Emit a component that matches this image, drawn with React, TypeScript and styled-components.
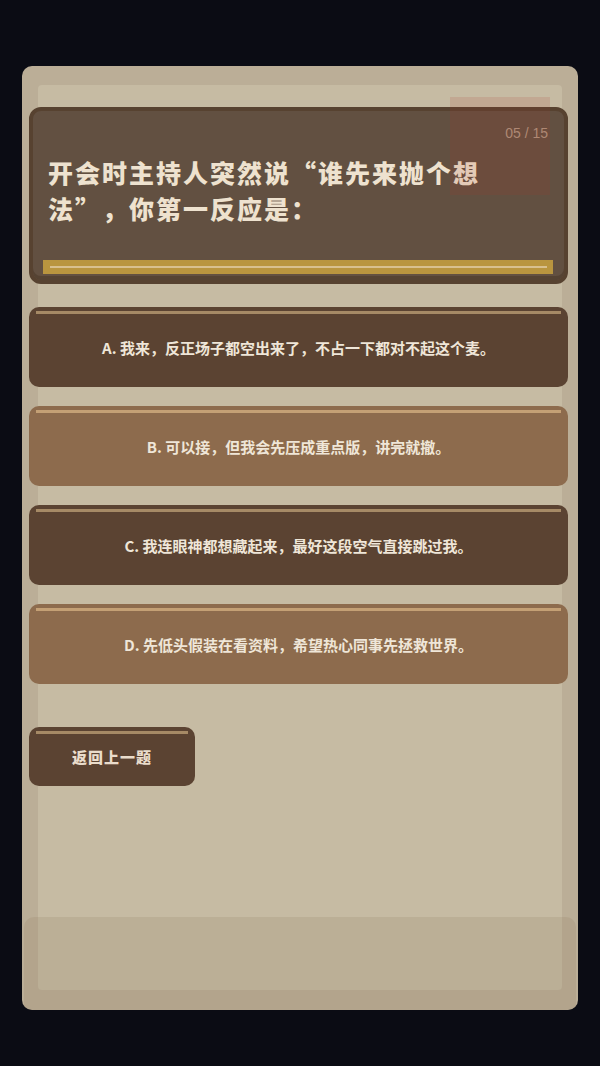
import React from 'react'
import styled, { createGlobalStyle } from 'styled-components'

const GlobalStyle = createGlobalStyle`
  html, body {
    margin: 0;
    padding: 0;
    background: #0b0c14;
  }
  body {
    font-family: 'Noto Sans CJK SC', 'Noto Sans', sans-serif;
  }
  * {
    box-sizing: border-box;
  }
`

type Tone = 'dark' | 'light'

const OPTIONS: { text: string; tone: Tone }[] = [
  { text: 'A. 我来，反正场子都空出来了，不占一下都对不起这个麦。', tone: 'dark' },
  { text: 'B. 可以接，但我会先压成重点版，讲完就撤。', tone: 'light' },
  { text: 'C. 我连眼神都想藏起来，最好这段空气直接跳过我。', tone: 'dark' },
  { text: 'D. 先低头假装在看资料，希望热心同事先拯救世界。', tone: 'light' },
]

const App: React.FC = () => {
  return (
    <>
      <GlobalStyle />
      <Page>
        <Card>
          <Stamp />
          <QuestionBox>
            <Counter>05 / 15</Counter>
            <QuestionText>开会时主持人突然说“谁先来抛个想法”，你第一反应是：</QuestionText>
            <ProgressBar />
          </QuestionBox>
          <OptionList>
            {OPTIONS.map((option, index) => (
              <OptionButton key={`option_${index}`} tone={option.tone}>
                {option.text}
              </OptionButton>
            ))}
          </OptionList>
          <BackButton>返回上一题</BackButton>
          <Footer />
        </Card>
      </Page>
    </>
  )
}

const Page = styled.div`
  width: 600px;
  height: 1066px;
  padding: 66px 22px 0 22px;
`

const Card = styled.div`
  position: relative;
  display: flex;
  flex-direction: column;
  width: 556px;
  height: 944px;
  padding: 41px 10px 0 7px;
  border-radius: 10px;
  background: #bbae97;
  overflow: hidden;

  &::before {
    content: '';
    position: absolute;
    top: 19px;
    left: 16px;
    right: 16px;
    bottom: 20px;
    background: #c6bba3;
    border-radius: 4px;
  }

  & > * {
    position: relative;
  }
`

const Stamp = styled.div`
  && {
    position: absolute;
  }
  top: 31px;
  left: 428px;
  width: 100px;
  height: 98px;
  background: rgba(170, 60, 40, 0.14);
  z-index: 2;
  pointer-events: none;
`

const QuestionBox = styled.div`
  display: flex;
  flex-direction: column;
  height: 177px;
  padding: 13px 11px 6px 10px;
  border: 4px solid #574230;
  border-radius: 12px;
  background: #625041;
  box-shadow: inset 0 -4px 0 rgba(70, 50, 35, 0.45);
`

const Counter = styled.div`
  align-self: flex-end;
  padding-right: 5px;
  font-family: 'Liberation Sans', 'Noto Sans', sans-serif;
  font-size: 14px;
  line-height: 18px;
  color: #b09680;
`

const QuestionText = styled.div`
  max-width: 450px;
  margin-top: 12px;
  padding-left: 5px;
  font-size: 25px;
  font-weight: 900;
  line-height: 36px;
  letter-spacing: 2px;
  text-spacing-trim: space-all;
  color: #eee2cf;
`

const ProgressBar = styled.div`
  position: relative;
  margin-top: auto;
  height: 14px;
  background: #b9953f;

  &::after {
    content: '';
    position: absolute;
    left: 7px;
    right: 6px;
    top: 6px;
    height: 2px;
    background: #d8c08f;
  }
`

const OptionList = styled.div`
  display: flex;
  flex-direction: column;
  gap: 19px;
  margin-top: 23px;
`

const OptionButton = styled.div<{ tone: Tone }>`
  position: relative;
  display: flex;
  align-items: center;
  justify-content: center;
  height: 80px;
  padding: 0 20px;
  border-radius: 10px;
  background: ${(props) => (props.tone === 'dark' ? '#5b4332' : '#8d6b4d')};
  font-size: 15px;
  font-weight: 600;
  color: #efe6d8;
  cursor: pointer;

  &::before {
    content: '';
    position: absolute;
    top: 4px;
    left: 7px;
    right: 7px;
    height: 3px;
    background: ${(props) => (props.tone === 'dark' ? '#a68a66' : '#c4a075')};
  }
`

const BackButton = styled.div`
  position: relative;
  display: flex;
  align-items: center;
  justify-content: center;
  width: 166px;
  height: 59px;
  margin-top: 43px;
  border-radius: 10px;
  background: #5b4332;
  font-size: 15px;
  font-weight: 900;
  letter-spacing: 1px;
  color: #eadccb;
  cursor: pointer;

  &::before {
    content: '';
    position: absolute;
    top: 4px;
    left: 7px;
    right: 7px;
    height: 3px;
    background: #a68a66;
  }
`

const Footer = styled.div`
  margin: auto -8px 0 -5px;
  height: 93px;
  border-radius: 10px 10px 0 0;
  background: rgba(150, 130, 105, 0.22);
`

export default App
